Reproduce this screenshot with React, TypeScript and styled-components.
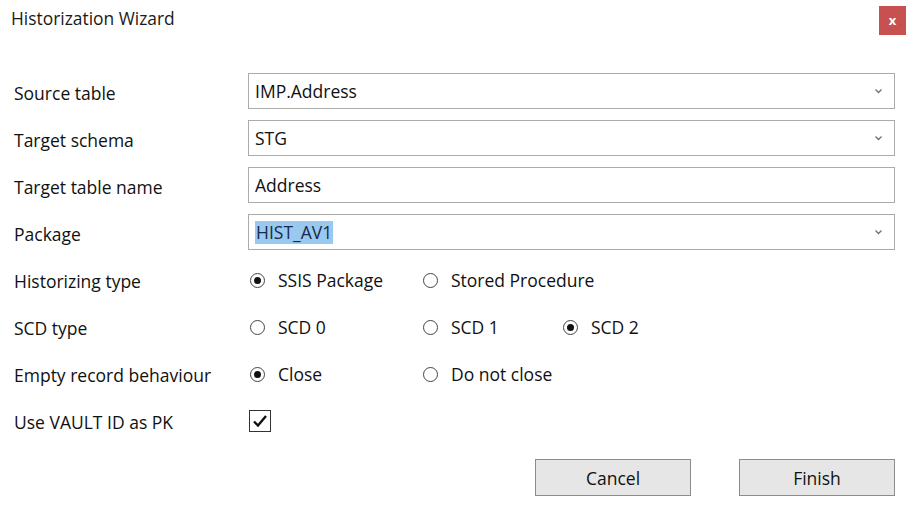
import React from "react";
import styled, { createGlobalStyle } from "styled-components";

const Global = createGlobalStyle`
  html, body { margin: 0; padding: 0; background: #ffffff; }
  body { font-family: "Open Sans", "Noto Sans", sans-serif; color: #000; }
  * { box-sizing: border-box; }
`;

const Dialog = styled.div`
  width: 906px;
  height: 506px;
  background: #ffffff;
  display: flex;
  flex-direction: column;
  overflow: hidden;
  & > * { flex-shrink: 0; }
`;

const TitleBar = styled.div`
  height: 73px;
  display: flex;
  align-items: flex-start;
  justify-content: space-between;
`;

const Title = styled.div`
  font-size: 17.4px;
  line-height: 22px;
  padding: 7px 0 0 11px;
  color: #1a1a1a;
`;

const CloseButton = styled.div`
  width: 27px;
  height: 29px;
  margin-top: 6px;
  background: #c75050;
  color: #fff;
  font-size: 13px;
  font-weight: 700;
  display: flex;
  align-items: center;
  justify-content: center;
  line-height: 1;
`;

const Form = styled.div`
  display: grid;
  grid-template-columns: 248px 647px;
  grid-auto-rows: 36px;
  row-gap: 11px;
`;

const Label = styled.div`
  font-size: 17.5px;
  padding-left: 14px;
  display: flex;
  align-items: center;
  color: #111;
  padding-top: 3px;
  white-space: nowrap;
`;

const Field = styled.div`
  border: 1px solid #ababab;
  background: #fff;
  display: flex;
  align-items: center;
  justify-content: space-between;
  padding: 0 11px 0 6px;
  font-size: 17.5px;
  color: #111;
`;

const Selected = styled.span`
  background: #99c9ef;
  color: #1a2a4a;
  padding: 0 1px;
  line-height: 23px;
`;

const Chevron = () => (
  <svg width="9" height="6" viewBox="0 0 9 6">
    <path d="M1.5 1.5 L4.5 4.5 L7.5 1.5" fill="none" stroke="#707070" strokeWidth="1.3" />
  </svg>
);

const RadioGroup = styled.div`
  display: grid;
  grid-template-columns: 173px 140px 1fr;
  align-items: center;
  padding-left: 2px;
  padding-top: 2px;
`;

const RadioItem = styled.div`
  display: flex;
  align-items: center;
  font-size: 17.5px;
  color: #111;
  white-space: nowrap;
`;

const RadioCircle = styled.span<{ $checked?: boolean }>`
  width: 15px;
  height: 15px;
  border-radius: 50%;
  border: 1px solid #444;
  margin-right: 13px;
  display: flex;
  align-items: center;
  justify-content: center;
  flex-shrink: 0;
  &::after {
    content: "";
    width: 7px;
    height: 7px;
    border-radius: 50%;
    background: #111;
    display: ${(p) => (p.$checked ? "block" : "none")};
  }
`;

const CheckCell = styled.div`
  display: flex;
  align-items: center;
  padding-left: 1px;
  padding-top: 2px;
`;

const CheckBox = styled.span`
  width: 22px;
  height: 22px;
  border: 1px solid #333;
  display: flex;
  align-items: center;
  justify-content: center;
  background: #fff;
`;

const Footer = styled.div`
  display: flex;
  justify-content: flex-end;
  gap: 48px;
  padding: 21px 11px 0 0;
`;

const Button = styled.div`
  width: 156px;
  height: 37px;
  border: 1px solid #8c8c8c;
  background: #e6e6e6;
  display: flex;
  align-items: center;
  justify-content: center;
  font-size: 17.5px;
  color: #111;
`;

const Radio = ({ label, checked }: { label: string; checked?: boolean }) => (
  <RadioItem>
    <RadioCircle $checked={checked} />
    {label}
  </RadioItem>
);

export default function App() {
  return (
    <>
      <Global />
      <Dialog>
        <TitleBar>
          <Title>Historization Wizard</Title>
          <CloseButton>x</CloseButton>
        </TitleBar>
        <Form>
          <Label>Source table</Label>
          <Field>
            <span>IMP.Address</span>
            <Chevron />
          </Field>
          <Label>Target schema</Label>
          <Field>
            <span>STG</span>
            <Chevron />
          </Field>
          <Label>Target table name</Label>
          <Field>
            <span>Address</span>
          </Field>
          <Label>Package</Label>
          <Field>
            <Selected>HIST_AV1</Selected>
            <Chevron />
          </Field>
          <Label>Historizing type</Label>
          <RadioGroup>
            <Radio label="SSIS Package" checked />
            <Radio label="Stored Procedure" />
          </RadioGroup>
          <Label>SCD type</Label>
          <RadioGroup>
            <Radio label="SCD 0" />
            <Radio label="SCD 1" />
            <Radio label="SCD 2" checked />
          </RadioGroup>
          <Label>Empty record behaviour</Label>
          <RadioGroup>
            <Radio label="Close" checked />
            <Radio label="Do not close" />
          </RadioGroup>
          <Label>Use VAULT ID as PK</Label>
          <CheckCell>
            <CheckBox>
              <svg width="16" height="14" viewBox="0 0 16 14">
                <path d="M2 7.5 L6 11.5 L14 2" fill="none" stroke="#111" strokeWidth="2.4" />
              </svg>
            </CheckBox>
          </CheckCell>
        </Form>
        <Footer>
          <Button>Cancel</Button>
          <Button>Finish</Button>
        </Footer>
      </Dialog>
    </>
  );
}
